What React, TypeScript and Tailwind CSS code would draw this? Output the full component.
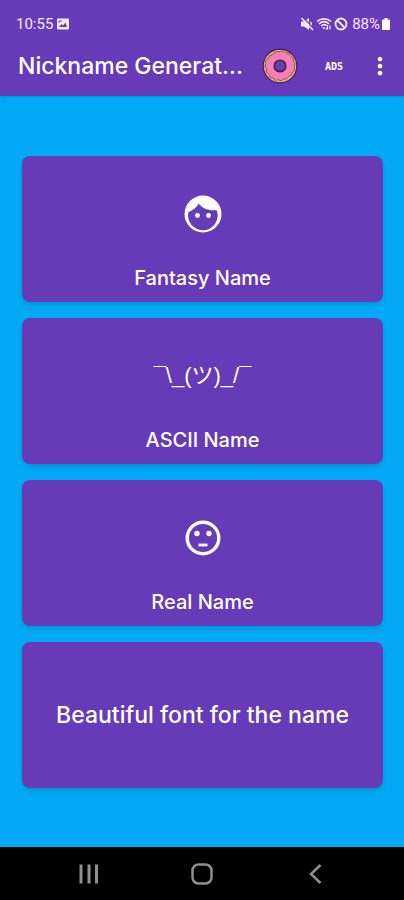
import React from 'react';
import { MdMoreVert } from 'react-icons/md';

const PhotoIcon: React.FC = () => (
  <svg viewBox="0 0 12 12" className="h-3 w-3" aria-hidden="true">
    <rect width="12" height="11" y="0.5" rx="1" fill="#f3e8ff" />
    <path d="M2 9l2.500-3 1.500 1.500L8.500 4.500 10 9z" fill="#673ab7" />
    <path d="M2 3h3M2 3v2" stroke="#673ab7" />
  </svg>
);

const MutedIcon: React.FC = () => (
  <svg viewBox="0 0 14 14" className="h-3.5 w-3.5" fill="#f3e8ff" aria-hidden="true">
    <path d="M1 4.500h3L9 1v12L4 9.500H1z" />
    <path d="M2.500 0l12 12" stroke="#673ab7" strokeWidth="1.200" />
    <path d="M1.500 1l11.500 12" stroke="#f3e8ff" strokeWidth="1.600" />
    <path d="M10.500 5c1 .8 1 2 .5 3" fill="none" stroke="#f3e8ff" strokeWidth="1.500" />
  </svg>
);

const WifiIcon: React.FC = () => (
  <svg viewBox="0 0 16 14" className="h-3.5 w-4" fill="none" stroke="#f3e8ff" strokeWidth="1.6" aria-hidden="true">
    <path d="M1 4.500C5 1 11 1 15 4.500" />
    <path d="M3 6.800c3-2.600 7-2.600 10 0" />
    <path d="M5 9c2-1.600 4-1.600 5.500-.5" />
    <path d="M6 10.200L8 12.500l1.500-2z" fill="#f3e8ff" stroke="none" />
    <path d="M11.500 8v4.500M10 11l1.500 1.500M14 12.500V8.500" strokeWidth="1.2" />
  </svg>
);

const BlockedIcon: React.FC = () => (
  <svg viewBox="0 0 14 14" className="h-3.5 w-3.5" fill="none" stroke="#f3e8ff" strokeWidth="1.8" aria-hidden="true">
    <circle cx="7" cy="7" r="5.500" />
    <path d="M3 3l8 8" />
  </svg>
);

const BatteryIcon: React.FC = () => (
  <svg viewBox="0 0 8 12" className="h-3 w-2" fill="#fff" aria-hidden="true">
    <path d="M2.500 0h3v1.500H7a1 1 0 0 1 1 1V11a1 1 0 0 1-1 1H1a1 1 0 0 1-1-1V2.500a1 1 0 0 1 1-1h1.500z" />
  </svg>
);

const DonutIcon: React.FC = () => (
  <svg viewBox="0 0 36 36" className="h-9 w-9" aria-hidden="true">
    <circle cx="18" cy="18" r="16.800" fill="#e9bb78" stroke="#3b2450" strokeWidth="1.200" />
    <path
      d="M18 3.500q3.500-2 5.800 1.200 4.200-.2 4.700 3.300 4 1.500 2.800 5 3 2.500 1 5.500 1.500 4-1.800 5.500 0 4-3.700 4.300-1.500 3.800-5 2.700-2.500 3-5.300.8-4 1.500-5.300-1.800-4 .2-4.200-3.500-3.800-1.500-2.500-5-3-3-.8-5.800-1-4 2.500-5 .5-4 4.300-4 2-3.800 5-3.200z"
      fill="#f57fb6"
      stroke="#74414a"
      strokeWidth="0.8"
    />
    <circle cx="18" cy="18" r="5.800" fill="#673ab7" stroke="#3a2455" strokeWidth="1.600" />
  </svg>
);

const HairFaceIcon: React.FC = () => (
  <svg viewBox="0 0 38 38" className="h-[38px] w-[38px]" aria-hidden="true">
    <circle cx="19" cy="19" r="18.500" fill="#fff" />
    <path d="M4.500 17C9 15.500 13 12 14.800 8.500c3.200 4.500 9 7.500 17.900 6.700A14.800 14.800 0 1 1 4.500 17z" fill="#673ab7" />
    <circle cx="13.500" cy="20.500" r="2.400" fill="#fff" />
    <circle cx="24.500" cy="20.500" r="2.400" fill="#fff" />
  </svg>
);

const NeutralFaceIcon: React.FC = () => (
  <svg viewBox="0 0 36 36" className="h-9 w-9" aria-hidden="true">
    <circle cx="18" cy="18" r="15.800" fill="none" stroke="#fff" strokeWidth="3.400" />
    <circle cx="12" cy="13.500" r="2.700" fill="#fff" />
    <circle cx="24" cy="13.500" r="2.700" fill="#fff" />
    <path d="M13.500 25h9" stroke="#fff" strokeWidth="2.800" />
  </svg>
);

const cards: { label: string; icon?: React.ReactNode }[] = [
  { label: 'Fantasy Name', icon: <HairFaceIcon /> },
  {
    label: 'ASCII Name',
    icon: <span className="font-['Liberation_Sans','Noto_Sans_CJK_JP',sans-serif] text-[22px]">¯\_(ツ)_/¯</span>,
  },
  { label: 'Real Name', icon: <NeutralFaceIcon /> },
  { label: 'Beautiful font for the name' },
];

const NameCard: React.FC<{ label: string; icon?: React.ReactNode }> = ({ label, icon }) => (
  <button
    type="button"
    className="flex h-[146px] w-full flex-col items-center justify-center rounded-lg bg-[#673ab7] text-white shadow-md"
  >
    {icon ? (
      <>
        <span className="flex h-[100px] items-center pt-4">{icon}</span>
        <span className="h-[46px] pt-2 text-xl leading-7 font-medium">{label}</span>
      </>
    ) : (
      <span className="text-[23px] leading-7 font-medium">{label}</span>
    )}
  </button>
);

export default function App() {
  return (
    <div className="flex min-h-screen flex-col bg-[#03a9f4] font-['Inter','Noto_Sans_CJK_JP',sans-serif]">
      <header className="bg-[#673ab7] text-white shadow-sm">
        <div className="flex h-9 items-center justify-between pt-3 pr-3.5 pl-4 font-['Roboto',sans-serif] text-[15px] text-purple-100">
          <div className="flex items-center gap-1">
            <span>10:55</span>
            <PhotoIcon />
          </div>
          <div className="flex items-center gap-0.5">
            <MutedIcon />
            <WifiIcon />
            <BlockedIcon />
            <span className="pl-0.5">88%</span>
            <BatteryIcon />
          </div>
        </div>
        <div className="flex h-[60px] items-center pr-2.5 pl-[18px]">
          <h1 className="flex-1 text-[23px] font-medium whitespace-nowrap">Nickname Generat...</h1>
          <button type="button" aria-label="Donut">
            <DonutIcon />
          </button>
          <button type="button" className="ml-6 w-6 text-center font-['DejaVu_Sans_Mono',monospace] text-[10px] font-bold">
            ADS
          </button>
          <button type="button" aria-label="More options" className="ml-5">
            <MdMoreVert className="h-7 w-7" />
          </button>
        </div>
      </header>

      <main className="flex flex-1 flex-col justify-center gap-4 pr-[21px] pl-[22px]">
        {cards.map(card => (
          <NameCard key={card.label} label={card.label} icon={card.icon} />
        ))}
      </main>

      <nav className="flex h-[53px] items-center justify-center gap-[92px] bg-black text-[#8f8f8f]">
        <button type="button" aria-label="Recent apps">
          <svg viewBox="0 0 22 22" className="h-[22px] w-[22px]" stroke="currentColor" strokeWidth="3">
            <path d="M4 1.500v19M12 1.500v19M19.500 1.500v19" />
          </svg>
        </button>
        <button type="button" aria-label="Home">
          <svg viewBox="0 0 22 22" className="h-[22px] w-[22px]" fill="none" stroke="currentColor" strokeWidth="2.500">
            <rect x="1.500" y="1.500" width="19" height="19" rx="6" />
          </svg>
        </button>
        <button type="button" aria-label="Back">
          <svg viewBox="0 0 22 22" className="h-[22px] w-[22px]" fill="none" stroke="currentColor" strokeWidth="2.500">
            <path d="M15.500 2L6 11l9.500 9" />
          </svg>
        </button>
      </nav>
    </div>
  );
}
